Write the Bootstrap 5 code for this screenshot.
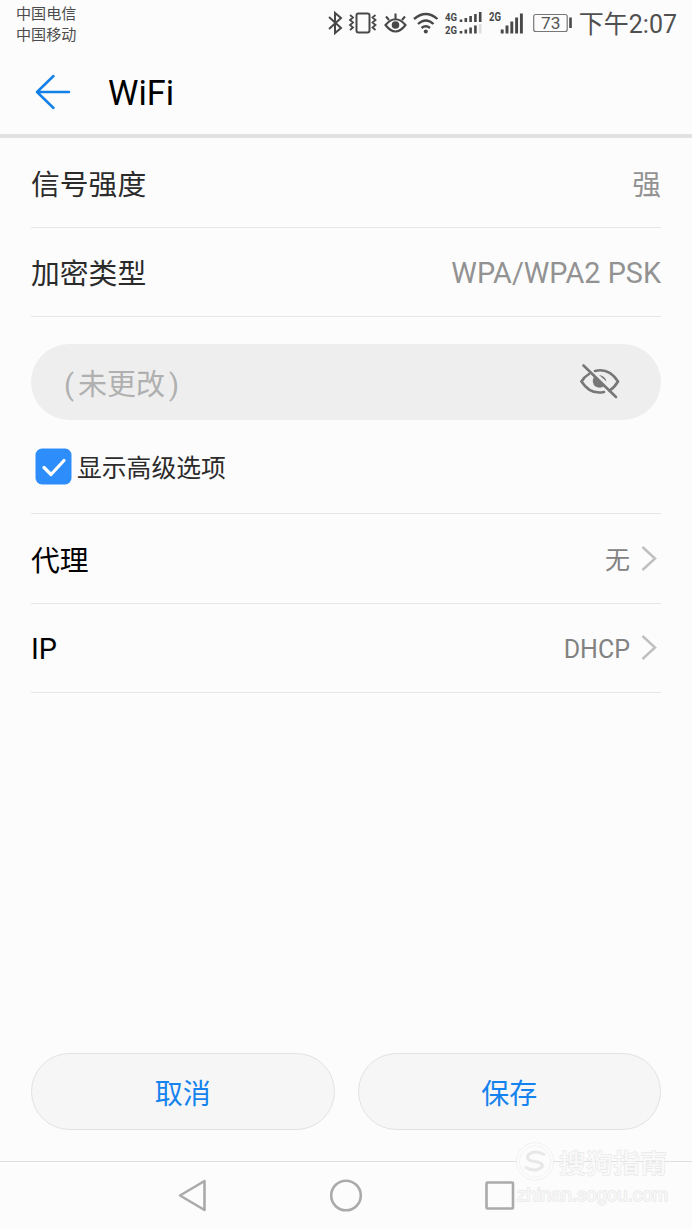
<!DOCTYPE html>
<html lang="zh-CN">
<head>
<meta charset="utf-8">
<meta name="viewport" content="width=device-width, initial-scale=1">
<title>WiFi</title>
<link href="https://cdn.jsdelivr.net/npm/bootstrap@5.3.0/dist/css/bootstrap.min.css" rel="stylesheet">
<style>
  body { background: #fcfcfc; font-family: Roboto, "Noto Sans CJK SC", sans-serif; color: #000; height: 1230px; overflow: hidden; line-height: 1; }
  svg { display: block; flex: none; }
  .status-strip { height: 48px; color: #484848; padding-right: 15px; }
  .carriers { font-size: 15.1px; line-height: 20.5px; padding: 4px 0 0 16px; color: #4c4c4c; }
  .clock { font-size: 25px; line-height: 48px; padding-top: 1px; color: #505050; margin-left: 6px; }
  .title-bar { height: 90px; border-bottom: 4px solid #e1e1e1; padding-left: 35px; }
  .title-bar svg { margin-top: 2px; }
  .title-bar h1 { font-size: 34.3px; font-weight: 400; line-height: 1; margin: 4px 0 0 37px; }
  .page-body { padding: 0 31px; }
  .setting { border-bottom: 1px solid #e6e6e6; font-size: 28.8px; line-height: 34px; height: 89.5px; padding-top: 3px; }
  .cjk { padding-top: 2px; }
  .dim { color: #2b2b2b; }
  .val { color: #929292; }
  .val-sm { font-size: 25px; color: #828282; }
  .pass-field { height: 76px; background: #eee; margin-top: 27px; padding: 0 41px 0 33px; color: #b0b0b0; font-size: 29px; }
  .pass-hint { padding-top: 6px; }
  .advanced { height: 94px; border-bottom: 1px solid #e6e6e6; font-size: 24.8px; color: #2b2b2b; padding-left: 4px; }
  .advanced span { padding: 6px 0 0 5px; }
  .action-row { padding: 0 31px 31px; gap: 23px; }
  .btn-pill { --bs-btn-color: #1583ee; --bs-btn-bg: #f6f6f6; --bs-btn-border-color: #e2e2e2; height: 77px; font-size: 28px; line-height: 1; padding: 6px 0 0; }
  .soft-keys { height: 69px; border-top: 1px solid #e0e0e0; }
  .stamp { right: 23px; bottom: 22px; width: 153px; }
</style>
</head>
<body class="d-flex flex-column position-relative">
  <header>
    <div class="status-strip d-flex justify-content-between">
      <div class="carriers"><div>中国电信</div><div>中国移动</div></div>
      <div class="d-flex">
        <svg width="246" height="48" viewBox="327 0 246 48" fill="none" stroke="#484848" stroke-width="2">
          <path d="M329 17l12 11-6 5V13l6 5-12 11"/>
          <rect x="356.500" y="13.500" width="13" height="19" rx="2"/>
          <path d="M350 15l3 2.500-3 2.500 3 2.500-3 2.500 3 2.500-3 2.500M375.500 15l-3 2.500 3 2.500-3 2.500 3 2.500-3 2.500 3 2.500" stroke-width="1.800"/>
          <path d="M385.500 25Q395.500 13.500 405.500 25Q395.500 38 385.500 25ZM395.500 19v-5.500M389 20l-3-3.500M402 20l3-3.500" stroke-width="2.100"/>
          <circle cx="395.500" cy="25" r="3.800" fill="#484848" stroke="none"/>
          <path d="M414 19Q425.800 9 437.500 19M418 24Q425.800 17 433.500 24M421.500 28Q425.800 24.500 430 28" stroke-width="2.300"/>
          <circle cx="425.800" cy="31.500" r="2" fill="#484848" stroke="none"/>
          <g fill="#484848" stroke="none" font-family="Roboto" font-weight="700" font-size="10.500">
            <text x="445" y="21.300" textLength="12" lengthAdjust="spacingAndGlyphs">4G</text>
            <text x="445" y="33.800" textLength="12" lengthAdjust="spacingAndGlyphs">2G</text>
            <text x="489" y="21.300" font-size="12" textLength="12" lengthAdjust="spacingAndGlyphs">2G</text>
          </g>
          <path d="M461 22v-2.500M465.800 22v-4M470.600 22v-6M475.400 22v-8M480.200 22v-10M461 33.500v-2.500M465.800 33.500v-4M470.600 33.500v-6M475.400 33.500v-8" stroke-width="2.600"/>
          <path d="M480.200 33.500v-9.500" stroke="#ddd" stroke-width="2.600"/>
          <path d="M502.200 33.500v-4M507 33.500v-8M511.800 33.500v-12M516.600 33.500v-16M521.400 33.500v-20" stroke-width="2.900"/>
          <rect x="533.700" y="14.500" width="33.500" height="17" rx="2" stroke="#777" stroke-width="1.200"/>
          <path d="M570.500 17.500v10.500" stroke-width="2.600"/>
          <text x="541" y="29.300" font-family="Roboto" font-size="17.300" fill="#555" stroke="none">73</text>
        </svg>
        <div class="clock">下午2:07</div>
      </div>
    </div>
    <div class="title-bar d-flex align-items-center">
      <svg width="36" height="36" viewBox="0 0 36 36" fill="none" stroke="#1380e8" stroke-width="2.500" stroke-linecap="round" stroke-linejoin="round"><path d="M18.500 2L2 18l16.500 16M2 18h32"/></svg>
      <h1>WiFi</h1>
    </div>
  </header>
  <main class="page-body flex-grow-1">
    <div class="setting d-flex align-items-center justify-content-between"><span class="dim cjk">信号强度</span><span class="val cjk">强</span></div>
    <div class="setting d-flex align-items-center justify-content-between"><span class="dim cjk">加密类型</span><span class="val">WPA/WPA2 PSK</span></div>
    <div class="pass-field rounded-pill d-flex align-items-center justify-content-between">
      <div class="pass-hint"><span class="me-1">(</span>未更改<span class="ms-1">)</span></div>
      <svg width="41" height="38" viewBox="579 364 41 38" fill="none" stroke="#777" stroke-width="2.600" stroke-linecap="round">
        <path d="M595 372Q609 368.500 618 382.500Q614.500 388.500 609.500 391.500M589 375Q584 378 581.500 382.500Q590 396 604 393"/>
        <path d="M594 377.500Q591 384 595.500 387.500Q600 390 604.500 387ZM599 376Q605.500 377 606.500 382.500Z" fill="#777" stroke="none"/>
        <path d="M583.500 366.500L616 398"/>
      </svg>
    </div>
    <div class="advanced d-flex align-items-center">
      <svg width="37" height="37" viewBox="0 0 37 37"><rect x=".5" y=".5" width="36" height="36" rx="6.500" fill="#2c8dfb"/><path d="M9 19.500l7 7 13-14" fill="none" stroke="#fff" stroke-width="3.200" stroke-linecap="round" stroke-linejoin="round"/></svg>
      <span>显示高级选项</span>
    </div>
    <div class="setting d-flex align-items-center justify-content-between"><span class="cjk">代理</span>
      <div class="d-flex align-items-center val-sm"><span class="cjk">无</span>
        <svg class="ms-2" width="23" height="28" viewBox="0 0 23 28" fill="none" stroke="#c0c0c0" stroke-width="2.500"><path d="M4.500 1l12.500 11.500L4.500 24"/></svg></div></div>
    <div class="setting d-flex align-items-center justify-content-between"><span>IP</span>
      <div class="d-flex align-items-center val-sm"><span class="cjk">DHCP</span>
        <svg class="ms-2" width="23" height="28" viewBox="0 0 23 28" fill="none" stroke="#c0c0c0" stroke-width="2.500"><path d="M4.500 1l12.500 11.500L4.500 24"/></svg></div></div>
  </main>
  <div class="action-row d-flex">
    <button class="btn btn-pill rounded-pill flex-fill w-50" type="button">取消</button>
    <button class="btn btn-pill rounded-pill flex-fill w-50" type="button">保存</button>
  </div>
  <nav class="soft-keys">
    <svg width="692" height="68" viewBox="0 1162 692 68" fill="none" stroke="#aaa" stroke-width="2.600" stroke-linejoin="round">
      <path d="M204.500 1181v29L180 1195.500Z"/><circle cx="346" cy="1195.500" r="14.800"/><rect x="486.500" y="1182.500" width="26.500" height="26" rx="1"/>
    </svg>
  </nav>
  <div class="stamp position-absolute">
    <svg width="153" height="68" viewBox="516 1140 153 68" fill="#fcfcfc" fill-opacity=".75" stroke="#e9e9e9" stroke-width="1" paint-order="stroke">
      <circle cx="535" cy="1161.500" r="18.500" stroke="#ececec"/><circle cx="535" cy="1161.500" r="15.500" stroke="#ececec"/>
      <path d="M545 1155Q535 1149 528 1155Q526 1161 535 1161.500Q544 1163 542 1167Q535 1173 525 1167" fill="none" stroke="#e8e8e8" stroke-width="3"/>
      <text x="559" y="1173" font-family="Noto Sans CJK SC" font-weight="500" font-size="26.500" textLength="108" stroke-width="1.300">搜狗指南</text>
      <text x="517" y="1201" font-family="Liberation Sans" font-size="18" textLength="151" lengthAdjust="spacingAndGlyphs" stroke-width="1.300">zhinan.sogou.com</text>
    </svg>
  </div>
<script src="https://cdn.jsdelivr.net/npm/bootstrap@5.3.0/dist/js/bootstrap.bundle.min.js"></script>
</body>
</html>
